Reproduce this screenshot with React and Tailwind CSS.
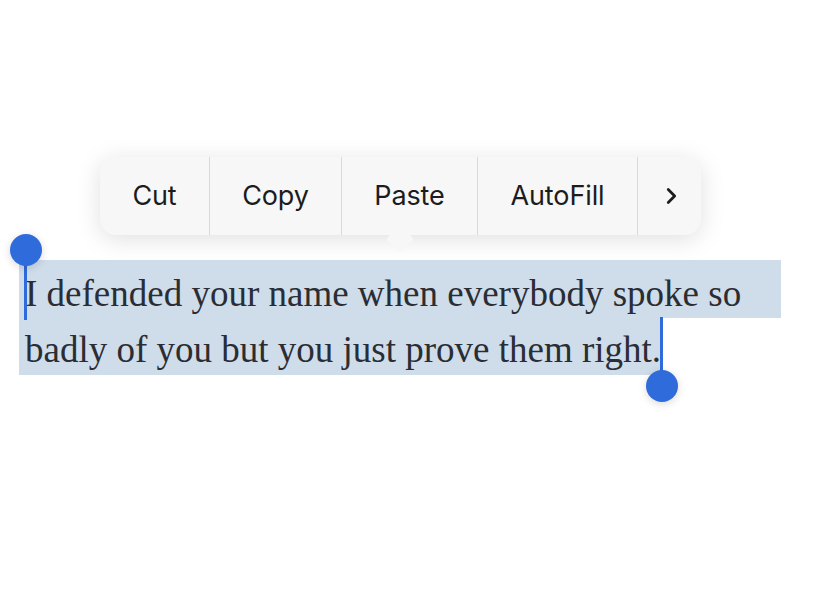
export default function App() {
  const items = [
    { label: "Cut", w: "w-[110px]" },
    { label: "Copy", w: "w-[132px]" },
    { label: "Paste", w: "w-[136px]" },
    { label: "AutoFill", w: "w-[160px]" },
  ];

  return (
    <div className="w-[813px] h-[610px] bg-white overflow-hidden">
      {/* edit menu */}
      <div className="pt-[157px] pl-[100px]">
        <div className="relative w-[601px] h-[78px] rounded-[16px] bg-[#f7f7f7] shadow-[0_4px_24px_rgba(0,0,0,0.13)] flex">
          {items.map((it) => (
            <div
              key={it.label}
              className={`${it.w} h-full flex items-center justify-center border-r border-[#d9d9d9] text-[27px] text-[#1c1c1e] font-['Inter',sans-serif] tracking-[-0.1px]`}
            >
              {it.label}
            </div>
          ))}
          <div className="flex-1 flex items-center justify-center">
            <svg viewBox="0 0 24 24" className="w-[22px] h-[22px] ml-[2px]" fill="none" stroke="#1c1c1e" strokeWidth="3" strokeLinecap="round" strokeLinejoin="round">
              <path d="M9 5l7 7-7 7" />
            </svg>
          </div>
          {/* arrow */}
          <div className="absolute left-[290px] top-[72px] w-[20px] h-[20px] bg-[#f7f7f7] rotate-45 rounded-[3px]" />
        </div>
      </div>

      {/* selected text */}
      <div className="relative mt-[25px] ml-[19px] font-['Liberation_Serif',serif] text-[37px] text-[#2a2d33]">
        <div className="w-[762px] h-[58px] bg-[#cfdcea] pl-[6px] leading-[68px] whitespace-nowrap">
          I defended your name when everybody spoke so
        </div>
        <div className="w-fit h-[57px] bg-[#cfdcea] pl-[6px] pr-[2px] leading-[64px] whitespace-nowrap">
          badly of you but you just prove them right.
        </div>

        {/* start handle */}
        <div className="absolute left-[5px] top-[-10px] w-[3px] h-[70px] bg-[#2f6bdb]" />
        <div className="absolute left-[-9px] top-[-26px] w-[32px] h-[32px] rounded-full bg-[#2f6bdb] shadow-[0_2px_8px_rgba(0,0,0,0.15)]" />

        {/* end handle */}
        <div className="absolute left-[641px] top-[57px] w-[3px] h-[70px] bg-[#2f6bdb]" />
        <div className="absolute left-[627px] top-[110px] w-[32px] h-[32px] rounded-full bg-[#2f6bdb] shadow-[0_2px_8px_rgba(0,0,0,0.15)]" />
      </div>
    </div>
  );
}
